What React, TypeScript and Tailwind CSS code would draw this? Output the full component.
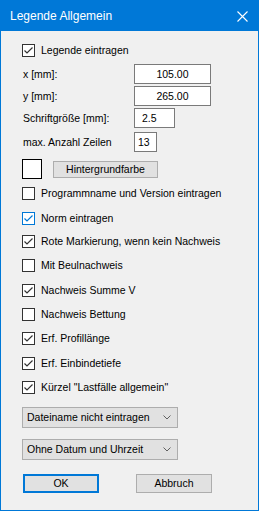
import React from 'react';

const font = { fontFamily: '"Liberation Sans", Arial, sans-serif' };

function Check({ checked, focus }: { checked: boolean; focus?: boolean }) {
  const color = focus ? '#0078d7' : '#333333';
  return (
    <div
      className={`w-[13px] h-[13px] bg-white border flex-shrink-0 ${focus ? 'border-[#0078d7]' : 'border-[#333333]'}`}
    >
      {checked && (
        <svg width="11" height="11" viewBox="0 0 11 11">
          <polyline points="1.5,5.5 4,8 9.5,2.5" fill="none" stroke={color} strokeWidth="1.2" />
        </svg>
      )}
    </div>
  );
}

function CheckRow({ label, checked, focus, mt }: { label: string; checked: boolean; focus?: boolean; mt: string }) {
  return (
    <div className={`flex items-center h-[13px] ${mt}`}>
      <Check checked={checked} focus={focus} />
      <span className="ml-[6px] leading-none">{label}</span>
    </div>
  );
}

function Field({ label, value, w, align, mt }: { label: string; value: string; w: string; align: string; mt: string }) {
  return (
    <div className={`flex items-center h-[20px] ${mt}`}>
      <span className="w-[112px] pl-[1px] leading-none">{label}</span>
      <div className={`h-[20px] ${w} bg-white border border-[#7a7a7a] flex items-center ${align}`}>
        <span className="leading-none">{value}</span>
      </div>
    </div>
  );
}

function Combo({ label, mt }: { label: string; mt: string }) {
  return (
    <div className={`flex items-center justify-between h-[21px] w-[156px] bg-[#e1e1e1] border border-[#adadad] pl-[4px] pr-[6px] ${mt}`}>
      <span className="leading-none">{label}</span>
      <svg width="8" height="5" viewBox="0 0 8 5">
        <polyline points="0.5,0.5 4,4 7.5,0.5" fill="none" stroke="#606060" strokeWidth="1" />
      </svg>
    </div>
  );
}

const boxes = [
  { label: 'Programmname und Version eintragen', checked: false, mt: 'mt-[8px]' },
  { label: 'Norm eintragen', checked: true, focus: true, mt: 'mt-[12px]' },
  { label: 'Rote Markierung, wenn kein Nachweis', checked: true, mt: 'mt-[10px]' },
  { label: 'Mit Beulnachweis', checked: false, mt: 'mt-[11px]' },
  { label: 'Nachweis Summe V', checked: true, mt: 'mt-[12px]' },
  { label: 'Nachweis Bettung', checked: false, mt: 'mt-[11px]' },
  { label: 'Erf. Profillänge', checked: true, mt: 'mt-[11px]' },
  { label: 'Erf. Einbindetiefe', checked: true, mt: 'mt-[12px]' },
  { label: 'Kürzel "Lastfälle allgemein"', checked: true, mt: 'mt-[11px]' },
];

export default function App() {
  return (
    <div className="w-[259px] h-[511px] bg-[#f0f0f0] border border-[#0078d7] text-[10.5px] text-black" style={font}>
      {/* Titelleiste */}
      <div className="h-[30px] bg-[#0078d7] flex items-center justify-between pl-[9px] pr-[10px] text-white text-[12px]">
        <span>Legende Allgemein</span>
        <svg width="11" height="11" viewBox="0 0 11 11">
          <path d="M0.5 0.5 L10.5 10.5 M10.5 0.5 L0.5 10.5" stroke="white" strokeWidth="1.1" />
        </svg>
      </div>

      <div className="pl-[21px] flex flex-col">
        <CheckRow label="Legende eintragen" checked mt="mt-[13px]" />
        <Field label="x [mm]:" value="105.00" w="w-[77px]" align="justify-center" mt="mt-[7px]" />
        <Field label="y [mm]:" value="265.00" w="w-[77px]" align="justify-center" mt="mt-[2px]" />
        <Field label="Schriftgröße [mm]:" value="2.5" w="w-[41px]" align="pl-[7px]" mt="mt-[2px]" />
        <Field label="max. Anzahl Zeilen" value="13" w="w-[23px]" align="pl-[3px]" mt="mt-[4px]" />

        <div className="flex items-center h-[20px] mt-[7px]">
          <div className="w-[20px] h-[20px] bg-white border border-black" />
          <div className="ml-[11px] w-[105px] h-[17px] bg-[#e1e1e1] border border-[#adadad] flex items-center justify-center leading-none">
            Hintergrundfarbe
          </div>
        </div>

        {boxes.map((b) => (
          <CheckRow key={b.label} label={b.label} checked={b.checked} focus={b.focus} mt={b.mt} />
        ))}

        <Combo label="Dateiname nicht eintragen" mt="mt-[13px]" />
        <Combo label="Ohne Datum und Uhrzeit" mt="mt-[11px]" />

        <div className="flex mt-[14px] h-[19px]">
          <div className="ml-[1px] w-[76px] h-[19px] bg-[#e1e1e1] border-2 border-[#0078d7] flex items-center justify-center leading-none">
            OK
          </div>
          <div className="ml-[37px] w-[76px] h-[19px] bg-[#e1e1e1] border border-[#adadad] flex items-center justify-center leading-none">
            Abbruch
          </div>
        </div>
      </div>
    </div>
  );
}
